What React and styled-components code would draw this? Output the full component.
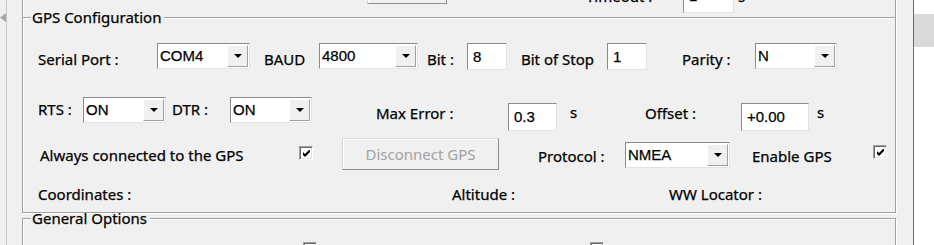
import React from 'react';
import styled, { createGlobalStyle, css } from 'styled-components';

const GlobalStyle = createGlobalStyle`
  html, body { margin: 0; padding: 0; height: 100%; overflow: hidden; background: #f0f0f0; }
  #root { height: 100%; }
`;

const spacing = css`
  flex: none;
  margin-left: ${p => p.$ml || 0}px;
  margin-top: ${p => p.$mt || 0}px;
  margin-bottom: ${p => p.$mb || 0}px;
`;

const Page = styled.div`
  display: flex;
  height: 100vh;
  font-family: "Noto Sans", "Open Sans", sans-serif;
  font-size: 15px;
  color: #000;
  -webkit-text-stroke: 0.25px currentColor;
`;

const Panel = styled.div`
  width: 914px;
  flex: none;
  display: flex;
  box-sizing: border-box;
  background: #f0f0f0;
  border-right: 1px solid #6b6b6b;
  overflow: hidden;
`;

const Gutter = styled.div`
  width: 22px;
  flex: none;
  display: flex;
`;

const ArrowCol = styled.div`
  width: 6px;
  padding-top: 12px;
  svg { display: block; }
`;

const GutterLine = styled.div`
  width: 1px;
  background: #c9c9c9;
`;

const Main = styled.div`
  width: 874px;
  flex: none;
  display: flex;
  flex-direction: column;
`;

const TopBox = styled.div`
  height: 17px;
  flex: none;
  box-sizing: border-box;
  border-left: 1px solid #a0a0a0;
  border-right: 1px solid #a0a0a0;
  box-shadow: inset 1px 0 0 #fff, 1px 0 0 #fff;
  display: flex;
  align-items: flex-end;
`;

const Group = styled.fieldset`
  margin: ${p => p.$mt || 0}px 0 0;
  padding: ${p => p.$pt}px 0 0 8px;
  width: 874px;
  min-width: 0;
  box-sizing: border-box;
  border: 1px solid #a0a0a0;
  box-shadow: inset 1px 1px 0 #fff, 1px 1px 0 #fff;
  flex: ${p => (p.$grow ? '1 0 auto' : 'none')};
`;

const Legend = styled.legend`
  padding: 0 3px 0 1px;
  height: 9px;
  line-height: 9px;
  white-space: nowrap;
  background: #f0f0f0;
`;

const Rows = styled.div`
  margin-left: 7px;
  display: flex;
  flex-direction: column;
`;

const Row = styled.div`
  display: flex;
  align-items: flex-start;
  height: ${p => p.$h}px;
`;

const Label = styled.span`
  ${spacing};
  width: ${p => (p.$w ? `${p.$w}px` : 'auto')};
  line-height: 20px;
  white-space: nowrap;
`;

const fieldBorder = css`
  box-sizing: border-box;
  background: #fff;
  border: 1px solid;
  border-color: #8c8c8c #e3e3e3 #e3e3e3 #8c8c8c;
`;

const ComboBox = styled.div`
  ${spacing};
  ${fieldBorder};
  width: ${p => p.$w}px;
  height: 26px;
  display: flex;
`;

const ComboText = styled.span`
  flex: 1;
  padding-left: 2px;
  font-family: "Liberation Sans", Arial, sans-serif;
  font-size: 15px;
  line-height: 24px;
`;

const DropButton = styled.span`
  flex: none;
  width: 21px;
  margin: 1px;
  box-sizing: border-box;
  background: #f0f0f0;
  border: 1px solid;
  border-color: #fff #a0a0a0 #a0a0a0 #fff;
  display: flex;
  align-items: center;
  justify-content: center;
  svg { display: block; }
`;

const TextBox = styled.div`
  ${spacing};
  ${fieldBorder};
  width: ${p => p.$w}px;
  height: ${p => p.$h}px;
  padding-left: 5px;
  font-family: "Liberation Sans", Arial, sans-serif;
  font-size: 15px;
  line-height: ${p => p.$lh || p.$h - 2}px;
  overflow: hidden;
`;

const CheckBox = styled.span`
  ${spacing};
  width: 14px;
  height: 14px;
  box-sizing: border-box;
  background: #fff;
  border: 1px solid;
  border-color: #a0a0a0 #fff #fff #a0a0a0;
  box-shadow: inset 1px 1px 0 #696969, inset -1px -1px 0 #e3e3e3;
  display: flex;
  align-items: center;
  justify-content: center;
  svg { display: block; }
`;

const PushButton = styled.div`
  ${spacing};
  width: ${p => p.$w}px;
  height: ${p => p.$h}px;
  box-sizing: border-box;
  background: #f0f0f0;
  border: 1px solid;
  border-color: #dadada #8f8f8f #8f8f8f #dadada;
  box-shadow: inset 1px 1px 0 #fff;
  color: ${p => (p.$disabled ? '#a2a2a2' : '#000')};
  -webkit-text-stroke: ${p => (p.$disabled ? '0' : '0.25px')};
  display: flex;
  align-items: center;
  justify-content: center;
  white-space: nowrap;
`;

const RightStrip = styled.div`
  flex: 1;
  background: #fff;
`;

const Thumb = styled.div`
  margin-top: 14px;
  height: 33px;
  background: #dadada;
`;

const Triangle = () => (
  <svg width="8" height="4" viewBox="0 0 8 4">
    <polygon points="0,0 8,0 4,4" fill="#000" />
  </svg>
);

const Check = () => (
  <svg width="7" height="7" viewBox="0 0 7 7">
    <polygon points="0,2 2,4 6,0 7,0 7,2 2,7 0,5" fill="#000" />
  </svg>
);

const Combo = ({ value, w, mt, ml }) => (
  <ComboBox $w={w} $mt={mt} $ml={ml}>
    <ComboText>{value}</ComboText>
    <DropButton>
      <Triangle />
    </DropButton>
  </ComboBox>
);

const Tick = ({ mt, ml, checked = true }) => (
  <CheckBox $mt={mt} $ml={ml}>{checked && <Check />}</CheckBox>
);

export default function App() {
  return (
    <Page>
      <GlobalStyle />
      <Panel>
        <Gutter>
          <ArrowCol>
            <svg width="7" height="11" viewBox="0 0 7 11">
              <polygon points="0,5.5 6,1 6,10" fill="#a6a6a6" />
            </svg>
          </ArrowCol>
          <GutterLine />
        </Gutter>
        <Main>
          <TopBox>
            <PushButton $w={80} $h={28} $ml={344} $mb={13} />
            <Label $w={97} $ml={139} $mb={11}>Timeout :</Label>
            <TextBox $w={51} $h={27} $lh={18} $mb={4}>1</TextBox>
            <Label $ml={4} $mb={11}>s</Label>
          </TopBox>

          <Group $mt={-4} $pt={21}>
            <Legend>GPS Configuration</Legend>
            <Rows>
              <Row $h={54}>
                <Label $w={119} $mt={6}>Serial Port :</Label>
                <Combo w={93} value="COM4" />
                <Label $w={55} $ml={14} $mt={6}>BAUD</Label>
                <Combo w={99} value="4800" />
                <Label $w={40} $ml={9} $mt={6}>Bit :</Label>
                <TextBox $w={40} $h={27}>8</TextBox>
                <Label $w={86} $ml={14} $mt={6}>Bit of Stop</Label>
                <TextBox $w={40} $h={27}>1</TextBox>
                <Label $w={73} $ml={35} $mt={6}>Parity :</Label>
                <Combo w={82} value="N" />
              </Row>
              <Row $h={41}>
                <Label $w={45} $mt={2}>RTS :</Label>
                <Combo w={83} value="ON" />
                <Label $w={58} $ml={6} $mt={2}>DTR :</Label>
                <Combo w={82} value="ON" />
                <Label $w={132} $ml={64} $mt={6}>Max Error :</Label>
                <TextBox $w={49} $h={28} $mt={6}>0.3</TextBox>
                <Label $w={75} $ml={13} $mt={5}>s</Label>
                <Label $w={96} $mt={6}>Offset :</Label>
                <TextBox $w={68} $h={28} $mt={6}>+0.00</TextBox>
                <Label $ml={8} $mt={5}>s</Label>
              </Row>
              <Row $h={40}>
                <Label $w={259} $ml={2} $mt={7}>Always connected to the GPS</Label>
                <Tick mt={8} />
                <PushButton $w={157} $h={32} $ml={29} $disabled>Disconnect GPS</PushButton>
                <Label $w={87} $ml={39} $mt={8}>Protocol :</Label>
                <Combo w={105} mt={4} value="NMEA" />
                <Label $w={121} $ml={22} $mt={8}>Enable GPS</Label>
                <Tick mt={7} />
              </Row>
              <Row $h={34}>
                <Label $w={414} $mt={6}>Coordinates :</Label>
                <Label $w={216} $mt={6}>Altitude :</Label>
                <Label $ml={1} $mt={6}>WW Locator :</Label>
              </Row>
            </Rows>
          </Group>

          <Group $mt={1} $pt={19} $grow>
            <Legend>General Options</Legend>
            <Rows>
              <Row $h={40}>
                <Tick ml={265} checked={false} />
                <Tick ml={273} checked={false} />
              </Row>
            </Rows>
          </Group>
        </Main>
      </Panel>
      <RightStrip>
        <Thumb />
      </RightStrip>
    </Page>
  );
}
